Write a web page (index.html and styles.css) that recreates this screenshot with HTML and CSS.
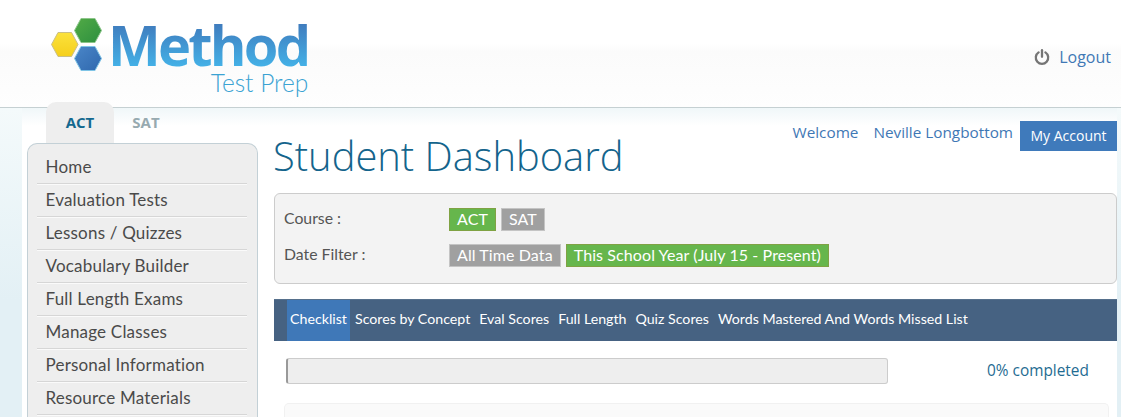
FILE: index.html
```html
<!DOCTYPE html>
<html lang="en">
<head>
<meta charset="utf-8">
<title>Student Dashboard</title>
<link rel="stylesheet" href="styles.css">
</head>
<body>
<header class="header">
  <a class="logo">
    <svg class="logo-mark" width="52" height="54" viewBox="0 0 52 54">
      <defs>
        <linearGradient id="gy" x1="0" y1="0" x2="0" y2="1"><stop offset="0" stop-color="#fbe23c"/><stop offset="1" stop-color="#f5cf1c"/></linearGradient>
        <linearGradient id="gg" x1="0" y1="0" x2="1" y2="1"><stop offset="0" stop-color="#52ab46"/><stop offset="1" stop-color="#2d8f3f"/></linearGradient>
        <linearGradient id="gb" x1="0" y1="0" x2="1" y2="1"><stop offset="0" stop-color="#4a86c8"/><stop offset="1" stop-color="#2f68ae"/></linearGradient>
      </defs>
      <polygon points="0.5,26.5 7,14.5 20.5,14.5 27,26.5 20.5,38.5 7,38.5" fill="url(#gy)" stroke="#c9bf86" stroke-width="1"/>
      <polygon points="23.5,12.5 30,0.5 44,0.5 50.5,12.5 44,24.5 30,24.5" fill="url(#gg)" stroke="#8dc58a" stroke-width="1"/>
      <polygon points="23.5,40.5 30,28.5 44,28.5 50.5,40.5 44,52.5 30,52.5" fill="url(#gb)" stroke="#7fc4e6" stroke-width="1"/>
    </svg>
    <span class="logo-words">
      <span class="logo-method">Method</span>
      <span class="logo-sub">Test Prep</span>
    </span>
  </a>
  <a class="logout">
    <svg width="16" height="16" viewBox="0 0 16 16" fill="none" stroke="#757575" stroke-width="2.3" stroke-linecap="round"><path d="M4.6 3.4a6.2 6.2 0 1 0 6.8 0"/><path d="M8 1.2v6.6"/></svg>
    <span>Logout</span>
  </a>
</header>
<div class="page">
  <aside class="sidebar">
    <div class="tabs">
      <span class="tab tab-active">ACT</span>
      <span class="tab">SAT</span>
    </div>
    <nav class="menu">
      <a class="menu-item">Home</a>
      <a class="menu-item">Evaluation Tests</a>
      <a class="menu-item">Lessons / Quizzes</a>
      <a class="menu-item">Vocabulary Builder</a>
      <a class="menu-item">Full Length Exams</a>
      <a class="menu-item">Manage Classes</a>
      <a class="menu-item">Personal Information</a>
      <a class="menu-item">Resource Materials</a>
    </nav>
  </aside>
  <main class="main">
    <div class="title-row">
      <h1 class="title">Student Dashboard</h1>
      <div class="account">
        <span class="welcome">Welcome</span>
        <span class="user">Neville Longbottom</span>
        <a class="account-btn">My Account</a>
      </div>
    </div>
    <section class="filters">
      <div class="filter-row">
        <span class="filter-label">Course :</span>
        <span class="chip chip-on">ACT</span>
        <span class="chip">SAT</span>
      </div>
      <div class="filter-row">
        <span class="filter-label">Date Filter :</span>
        <span class="chip">All Time Data</span>
        <span class="chip chip-on">This School Year (July 15 - Present)</span>
      </div>
    </section>
    <nav class="subnav">
      <a class="subnav-item subnav-active">Checklist</a>
      <a class="subnav-item">Scores by Concept</a>
      <a class="subnav-item">Eval Scores</a>
      <a class="subnav-item">Full Length</a>
      <a class="subnav-item">Quiz Scores</a>
      <a class="subnav-item">Words Mastered And Words Missed List</a>
    </nav>
    <div class="progress-row">
      <div class="progress"></div>
      <span class="progress-label">0% completed</span>
    </div>
    <div class="panel"></div>
  </main>
</div>
</body>
</html>
```
FILE: styles.css
```css
* { box-sizing: border-box; }
html, body { height: 100%; }
body {
  margin: 0;
  height: 417px;
  overflow: hidden;
  font-family: "Lato", "Open Sans", sans-serif;
  background: linear-gradient(to bottom, #f4fafb 108px, #e3f0f5 300px);
  color: #444;
}
.header {
  height: 108px;
  display: flex;
  justify-content: space-between;
  background: linear-gradient(to bottom, #ffffff 44px, #fbfbfb 52px, #fefefe 100%);
  border-bottom: 1px solid #c5d0d2;
  padding: 18px 9px 0 51px;
}
.logo { display: flex; align-items: flex-start; }
.logo-mark { flex: none; }
.logo-words { display: flex; flex-direction: column; align-items: flex-end; margin-left: 5px; }
.logo-method {
  font-family: "Open Sans", sans-serif;
  font-weight: 700;
  font-size: 56px;
  line-height: 52px;
  letter-spacing: -2.8px;
  background: linear-gradient(to bottom, #3f75b8, #44b5ea);
  -webkit-background-clip: text;
  background-clip: text;
  color: transparent;
}
.logo-sub {
  font-family: "Lato", sans-serif;
  font-weight: 300;
  font-size: 24.5px;
  line-height: 26px;
  color: #3ba3d3;
}
.logout {
  display: flex;
  align-items: center;
  gap: 9px;
  height: 22px;
  margin-top: 28px;
  margin-right: 1px;
  font-family: "Open Sans", sans-serif;
  font-size: 16px;
  color: #3f78b5;
}
.page {
  display: flex;
  width: 1095px;
  height: 309px;
  margin: 0 0 0 22px;
  background: linear-gradient(to bottom, #f0f7f9, #ffffff 18px);
}
.sidebar { width: 236px; flex: none; padding-left: 5px; }
.tabs { display: flex; margin: -6px 0 0 19px; height: 41px; }
.tab {
  width: 64px;
  text-align: center;
  padding-top: 10px;
  font-family: "Open Sans", sans-serif;
  font-weight: 700;
  font-size: 15px;
  line-height: 20px;
  color: #97aab0;
}
.tab-active {
  width: 68px;
  background: #eeeeee;
  border-radius: 10px 10px 0 0;
  color: #14688f;
}
.menu {
  width: 231px;
  height: 274px;
  padding: 7px 10px 0 9px;
  background: #eeeeee;
  border: 1px solid #c3d0d6;
  border-bottom: 0;
  border-radius: 10px 10px 0 0;
}
.menu-item {
  display: block;
  height: 33px;
  padding-left: 8.5px;
  font-size: 17px;
  line-height: 31px;
  letter-spacing: 0.2px;
  color: #4a4a4a;
  border-bottom: 1px solid #d6d6d6;
  box-shadow: 0 1px 0 #fafafa;
}
.main { flex: 1; padding: 0 0 0 16px; min-width: 0; }
.title-row { display: flex; justify-content: space-between; height: 85px; }
.title {
  margin: 20px 0 0 -1px;
  font-family: "Open Sans", sans-serif;
  font-weight: 300;
  font-size: 39.9px;
  line-height: 56px;
  color: #14648c;
}
.account { display: flex; align-items: flex-start; font-family: "Open Sans", sans-serif; font-size: 15.3px; color: #3f78b5; padding-top: 12px; }
.welcome { margin-right: 15px; line-height: 24px; }
.user { margin-right: 7px; line-height: 24px; }
.account-btn {
  width: 97px;
  height: 30px;
  margin-top: 1px;
  background: #3f7abb;
  color: #fff;
  font-size: 14px;
  font-weight: 500;
  line-height: 30px;
  text-align: center;
}
.filters {
  height: 91px;
  padding: 14px 9px 0 9px;
  background: #f3f3f3;
  border: 1px solid #cccccc;
  border-radius: 6px;
}
.filter-row { display: flex; align-items: center; gap: 5px; height: 23px; margin-bottom: 13px; }
.filter-label { width: 160px; font-size: 15.8px; color: #555; margin-top: -5px; }
.chip {
  height: 23px;
  padding: 0 7px;
  background: #a0a0a0;
  border: 1px solid #c4c4c4;
  color: #fff;
  font-size: 16px;
  letter-spacing: 0.1px;
  line-height: 19px;
}
.chip-on { background: #66b64c; border-color: #7fa243; }
.subnav {
  display: flex;
  height: 42px;
  margin-top: 15px;
  padding-left: 13px;
  background: #466282;
  font-size: 14.2px;
  color: #fff;
  border-top: 1px solid #56708c;
}
.subnav-item { margin-right: 9px; line-height: 38px; white-space: nowrap; }
.subnav-active { background: #3f78b8; width: 63px; flex: none; text-align: center; margin-right: 5px; }
.progress-row { display: flex; align-items: center; height: 26px; margin: 17px 0 0 12px; }
.progress {
  width: 602px;
  height: 26px;
  background: #eeeeee;
  border: 1px solid #cccccc;
  border-left: 2px solid #999999;
  border-radius: 3px;
}
.progress-label { margin: -2px 0 0 99px; font-family: "Open Sans", sans-serif; font-size: 15.4px; color: #1f6c92; }
.panel {
  height: 14px;
  margin: 19px 8px 0 10px;
  background: #fafafa;
  border: 1px solid #f1f1f1;
  border-bottom: 0;
  border-radius: 5px 5px 0 0;
}
```
